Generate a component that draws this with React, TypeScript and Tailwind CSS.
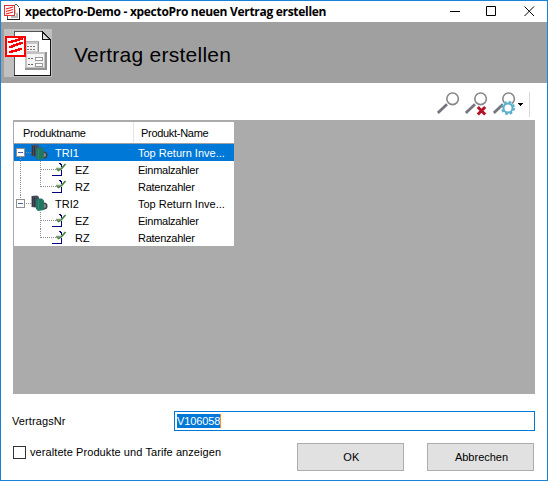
import React from "react";

const FONT = "font-['Liberation_Sans',Arial,sans-serif]";

function TitleIcon() {
  return (
    <svg width="16" height="17" viewBox="0 0 16 17" shapeRendering="crispEdges">
      <path d="M4 0H12L15 3V16H4Z" fill="#fff" />
      <path d="M3 15.5H15.5V4" fill="none" stroke="#222" />
      <path d="M3.500 11V15M11 .5H12.500L15.500 3.500" fill="none" stroke="#555" />
      <rect x="6" y="6" width="6" height="4" fill="#ccc" />
      <rect x="7" y="9" width="7" height="5" fill="#bbb" />
      <rect x="9" y="10" width="3" height="2" fill="#fff" />
      <rect x=".5" y="1.500" width="10" height="10" fill="#fff" stroke="#d33" />
      <path d="M2 5L9 3M2 7.500L9 5.500M2 10L9 8" stroke="#e22" strokeWidth="1.300" shapeRendering="auto" />
    </svg>
  );
}

function HeaderIcon() {
  return (
    <svg width="48" height="48" viewBox="0 0 48 48" shapeRendering="crispEdges">
      <rect width="48" height="48" fill="#c0c0c0" />
      <path d="M10.500 2.500H38L46.500 11V46.500H10.500Z" fill="#fff" stroke="#555" />
      <path d="M38 2.500V10.500H46" fill="#ddd" stroke="#111" />
      <path d="M38 2L47 11M46.500 11V46.500H10" fill="none" stroke="#111" />
      <path d="M39 0H48V11H47L38 2Z" fill="#c0c0c0" />
      <path d="M37.500 2.500L46.500 11" stroke="#111" shapeRendering="auto" />
      <rect x="21" y="12" width="14" height="12" fill="#c8c8c8" />
      <rect x="23" y="15" width="10" height="7" fill="#f4f4f4" />
      <path d="M21 12.500H35" fill="none" stroke="#b0b0b0" />
      <path d="M34.500 13V23" stroke="#909090" />
      <path d="M23 17.500H32M23 20.500H32" stroke="#777" strokeDasharray="2 1" />
      <rect x="21" y="23" width="22" height="18" fill="#c4c4c4" />
      <rect x="23" y="25" width="17" height="13" fill="#f4f4f4" />
      <path d="M21 40H42V23" fill="none" stroke="#929292" strokeWidth="2" />
      <path d="M24 29.500H30M24 35.500H30" stroke="#666" strokeDasharray="2 1" />
      <rect x="31.500" y="28.500" width="7" height="3" fill="#fff" stroke="#999" />
      <rect x="31.500" y="34.500" width="7" height="3" fill="#fff" stroke="#999" />
      <rect x="2" y="8" width="19" height="19" fill="#fff" stroke="#f00" strokeWidth="2" />
      <path d="M4 13H8V12H12V11H15V10H19M5 18H8V17H10V16H13V15H16V14H19M5 23H8V22H12V21H15V20H18" fill="none" stroke="#f00" strokeWidth="1.800" />
    </svg>
  );
}

function Lens({ children, width = 24 }: { children?: React.ReactNode; width?: number }) {
  return (
    <svg width={width} height="26" viewBox={`0 0 ${width} 26`}>
      <path d="M.8 20.900L10 12.200" stroke="#77757f" strokeWidth="2.800" />
      <circle cx="15.600" cy="6.800" r="5.800" fill="#fff" stroke="#85858a" strokeWidth="1.600" />
      {children}
    </svg>
  );
}

function ProductIcon() {
  return (
    <svg width="17" height="17" viewBox="0 0 17 17">
      <path d="M0.500 1L6 0.500L8 2V13L0.500 12Z" fill="#464c59" />
      <path d="M1.500 2V11M3.500 2V12" stroke="#303642" />
      <circle cx="13" cy="11" r="2.800" fill="#8a9096" stroke="#3c4348" strokeWidth="1.500" />
      <path d="M5 5L7 3.500H11L13 5.500V15L7 16L5 14Z" fill="#237564" />
      <path d="M7.500 5V15" stroke="#2f8b76" />
    </svg>
  );
}

function TariffIcon() {
  return (
    <svg width="16" height="17" viewBox="0 0 16 17" shapeRendering="crispEdges">
      <path d="M0 14.500H9.500V9M7 2.500H9M8 3.500H10M9.500 4V6" fill="none" stroke="#000080" />
      <path d="M4.500 7.500L6.500 9.500L9.500 7.500L13.500 3" fill="none" stroke="#43833d" strokeWidth="1.700" shapeRendering="auto" />
      <path d="M4 7.500H9" fill="none" stroke="#8f9a7c" strokeWidth="1.500" shapeRendering="auto" />
    </svg>
  );
}

function ParentRow({ name, selected = false }: { name: string; selected?: boolean }) {
  return (
    <div className={`flex h-[17px] items-center ${selected ? "bg-[#0078d7] text-white" : "text-black"}`}>
      <svg width="17" height="17" className="shrink-0" shapeRendering="crispEdges">
        <path d={selected ? "M6.500 13V17" : "M6.500 0V4"} stroke="#909090" strokeDasharray="1 1" />
        <path d="M12 8.500H19" stroke="#909090" strokeDasharray="1 1" />
        <rect x="2.500" y="4.500" width="8" height="8" fill="#fff" stroke="#919191" />
        <path d="M4 8.500H9" stroke="#4b63a7" />
      </svg>
      <ProductIcon />
      <span className="ml-[7px] mt-[2px] w-[83px] whitespace-nowrap">{name}</span>
      <span className="mt-[2px] whitespace-nowrap">Top Return Inve...</span>
    </div>
  );
}

function ChildRow({ name, label, last = false, trunk = false }: { name: string; label: string; last?: boolean; trunk?: boolean }) {
  return (
    <div className="flex h-[17px] items-center">
      <svg width="38" height="17" className="shrink-0 overflow-visible" shapeRendering="crispEdges">
        {trunk && <path d="M6.500 0V17" stroke="#909090" strokeDasharray="1 1" />}
        <path d={last ? "M26.500 0V9" : "M26.500 0V17"} stroke="#909090" strokeDasharray="1 1" />
        <path d="M27 8.500H42" stroke="#909090" strokeDasharray="1 1" />
      </svg>
      <TariffIcon />
      <span className="ml-[7px] mt-[2px] w-[63px]">{name}</span>
      <span className="mt-[2px] whitespace-nowrap tracking-[-0.25px]">{label}</span>
    </div>
  );
}

export default function App() {
  return (
    <div className={`flex h-[481px] w-[548px] flex-col border border-[#1883d7] bg-white text-[11px] leading-[15px] text-black ${FONT}`}>
      <div className="flex h-[21px] shrink-0 items-center">
        <div className="ml-[3px] mt-px"><TitleIcon /></div>
        <span className="-mt-px ml-[5px] whitespace-nowrap font-['Open_Sans',sans-serif] text-[12px] font-bold tracking-[-0.3px]">xpectoPro-Demo - xpectoPro neuen Vertrag erstellen</span>
        <svg width="86" height="11" className="ml-auto mr-[11px] shrink-0" fill="none" stroke="#000">
          <path d="M0 5.500H10M36.500 .5H45.500V9.500H36.500Z" />
          <path d="M74.500 .5L84 10M84 .5L74.500 10" />
        </svg>
      </div>
      <div className="flex h-[61px] shrink-0 items-center bg-[#a0a0a0] pl-[3px]">
        <HeaderIcon />
        <h1 className="ml-[22px] mt-[4px] whitespace-nowrap text-[21px] leading-[24px] tracking-[0.25px]">Vertrag erstellen</h1>
      </div>
      <div className="flex h-[37px] shrink-0 items-start pl-[436px] pt-[9px]">
        <Lens width={28} />
        <Lens width={28}>
          <path d="M12.800 15L20.200 22.500M20.200 15L12.800 22.500" stroke="#b51225" strokeWidth="3" />
        </Lens>
        <Lens width={25}>
          <circle cx="15" cy="16" r="6" fill="#fff" stroke="#5bb0cc" strokeWidth="2" strokeDasharray="2.700 2" />
          <circle cx="15" cy="16" r="4.500" fill="none" stroke="#5bb0cc" strokeWidth="2" />
        </Lens>
        <svg width="7" height="24" shapeRendering="crispEdges"><path d="M0 11H5L2.500 14Z" fill="#000" /></svg>
        <div className="ml-1 h-[25px] w-px bg-[#d8d8dc]" />
      </div>
      <div className="ml-3 h-[274px] w-[522px] shrink-0 bg-[#ababab] pl-px pt-[2px]">
        <div className="w-[220px] bg-white">
          <div className="flex h-[22px] items-start border-b border-[#a0a0a0]">
            <span className="h-full w-[120px] border-r border-[#e5e5e5] pl-[9px] pt-[4px] tracking-[-0.25px]">Produktname</span>
            <span className="pl-[7px] pt-[4px] tracking-[-0.3px]">Produkt-Name</span>
          </div>
          <ParentRow name="TRI1" selected />
          <ChildRow name="EZ" label="Einmalzahler" trunk />
          <ChildRow name="RZ" label="Ratenzahler" trunk last />
          <ParentRow name="TRI2" />
          <ChildRow name="EZ" label="Einmalzahler" />
          <ChildRow name="RZ" label="Ratenzahler" last />
        </div>
      </div>
      <div className="mt-[17px] flex h-5 shrink-0 items-center">
        <span className="w-[173px] pl-[11px] tracking-[0.1px]">VertragsNr</span>
        <div className="flex h-5 w-[361px] items-center border border-[#0078d7] pl-[2px]">
          <span className="h-[14px] w-[44px] whitespace-nowrap border-r border-[#ff8728] bg-[#0078d7] leading-[14px] tracking-[-0.1px] text-white">V106058</span>
        </div>
      </div>
      <div className="mt-3 flex h-7 shrink-0">
        <label className="flex h-[19px] w-[284px] items-center pl-3">
          <span className="-mt-px h-[13px] w-[13px] border border-[#333]" />
          <span className="ml-1 whitespace-nowrap tracking-[0.08px]">veraltete Produkte und Tarife anzeigen</span>
        </label>
        <button className="ml-3 h-7 w-[107px] border border-[#adadad] bg-[#e1e1e1] pl-[2px] tracking-[0.2px]">OK</button>
        <button className="ml-[23px] h-7 w-[107px] border border-[#adadad] bg-[#e1e1e1] pl-[2px]">Abbrechen</button>
      </div>
    </div>
  );
}
